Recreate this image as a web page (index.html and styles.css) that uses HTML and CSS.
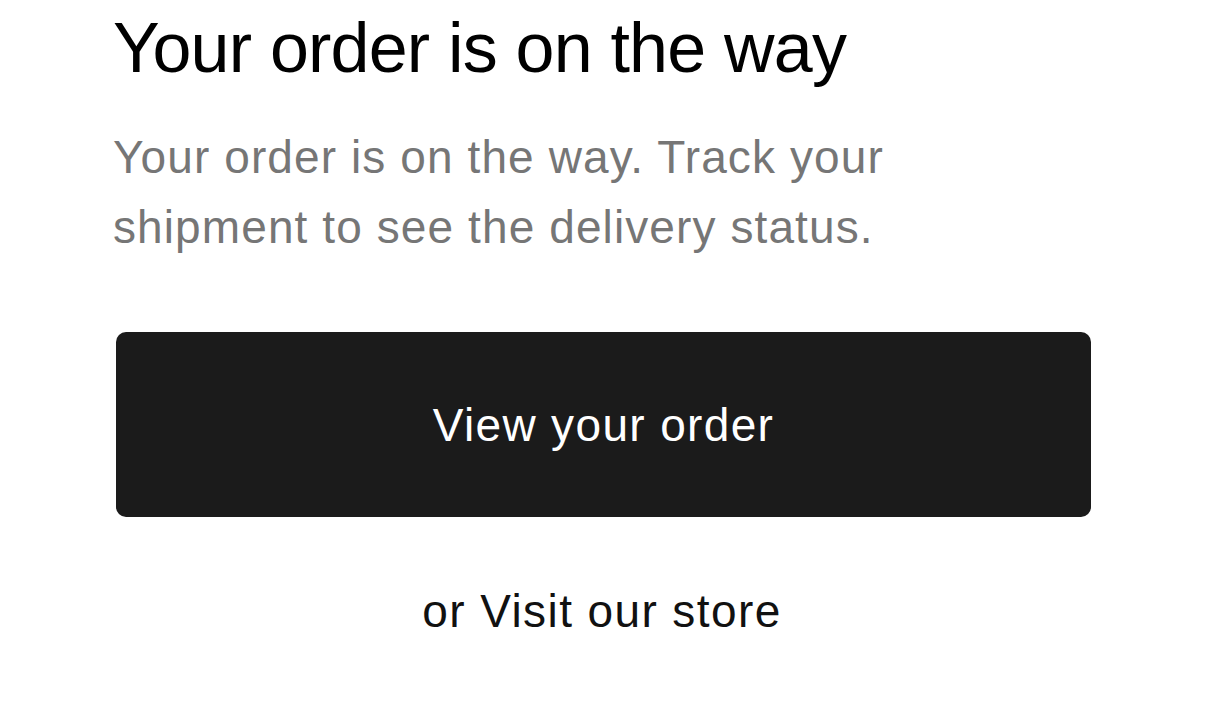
FILE: index.html
```html
<!DOCTYPE html>
<html lang="en">
<head>
  <meta charset="UTF-8" />
  <meta name="viewport" content="width=device-width, initial-scale=1.0"/>
  <title>Your order is on the way</title>
  <link rel="stylesheet" href="styles.css">
</head>
<body>

  <main class="order-status">
    <h1 class="title">Your order is on the way</h1>
    <p class="lead">Your order is on the way. Track your<br>shipment to see the delivery status.</p>

    <a class="btn-primary" href="#">View your order</a>

    <div class="secondary">
      <a href="#">or Visit our store</a>
    </div>
  </main>

</body>
</html>
```

FILE: styles.css
```css
body {
  margin: 0;
  background: #fff;
  font-family: "Liberation Sans", Arial, sans-serif;
  color: #000;
}

.order-status {
  display: flex;
  flex-direction: column;
  padding: 6px 115px 0 113px;
}

.title {
  margin: 0;
  font-size: 70px;
  font-weight: normal;
  line-height: 84px;
  letter-spacing: -0.8px;
}

.lead {
  margin: 32px 0 0;
  font-size: 46px;
  line-height: 70px;
  letter-spacing: 1.1px;
  color: #767676;
}

.btn-primary {
  display: flex;
  align-items: center;
  justify-content: center;
  height: 185px;
  margin: 70px 0 0 3px;
  background: #1b1b1b;
  border-radius: 10px;
  color: #fff;
  text-decoration: none;
  font-size: 46px;
  letter-spacing: 1.35px;
}

.secondary {
  margin-top: 59px;
  text-align: center;
  font-size: 46px;
  line-height: 70px;
  letter-spacing: 1.4px;
}

.secondary a {
  color: #111;
  text-decoration: none;
}
```
